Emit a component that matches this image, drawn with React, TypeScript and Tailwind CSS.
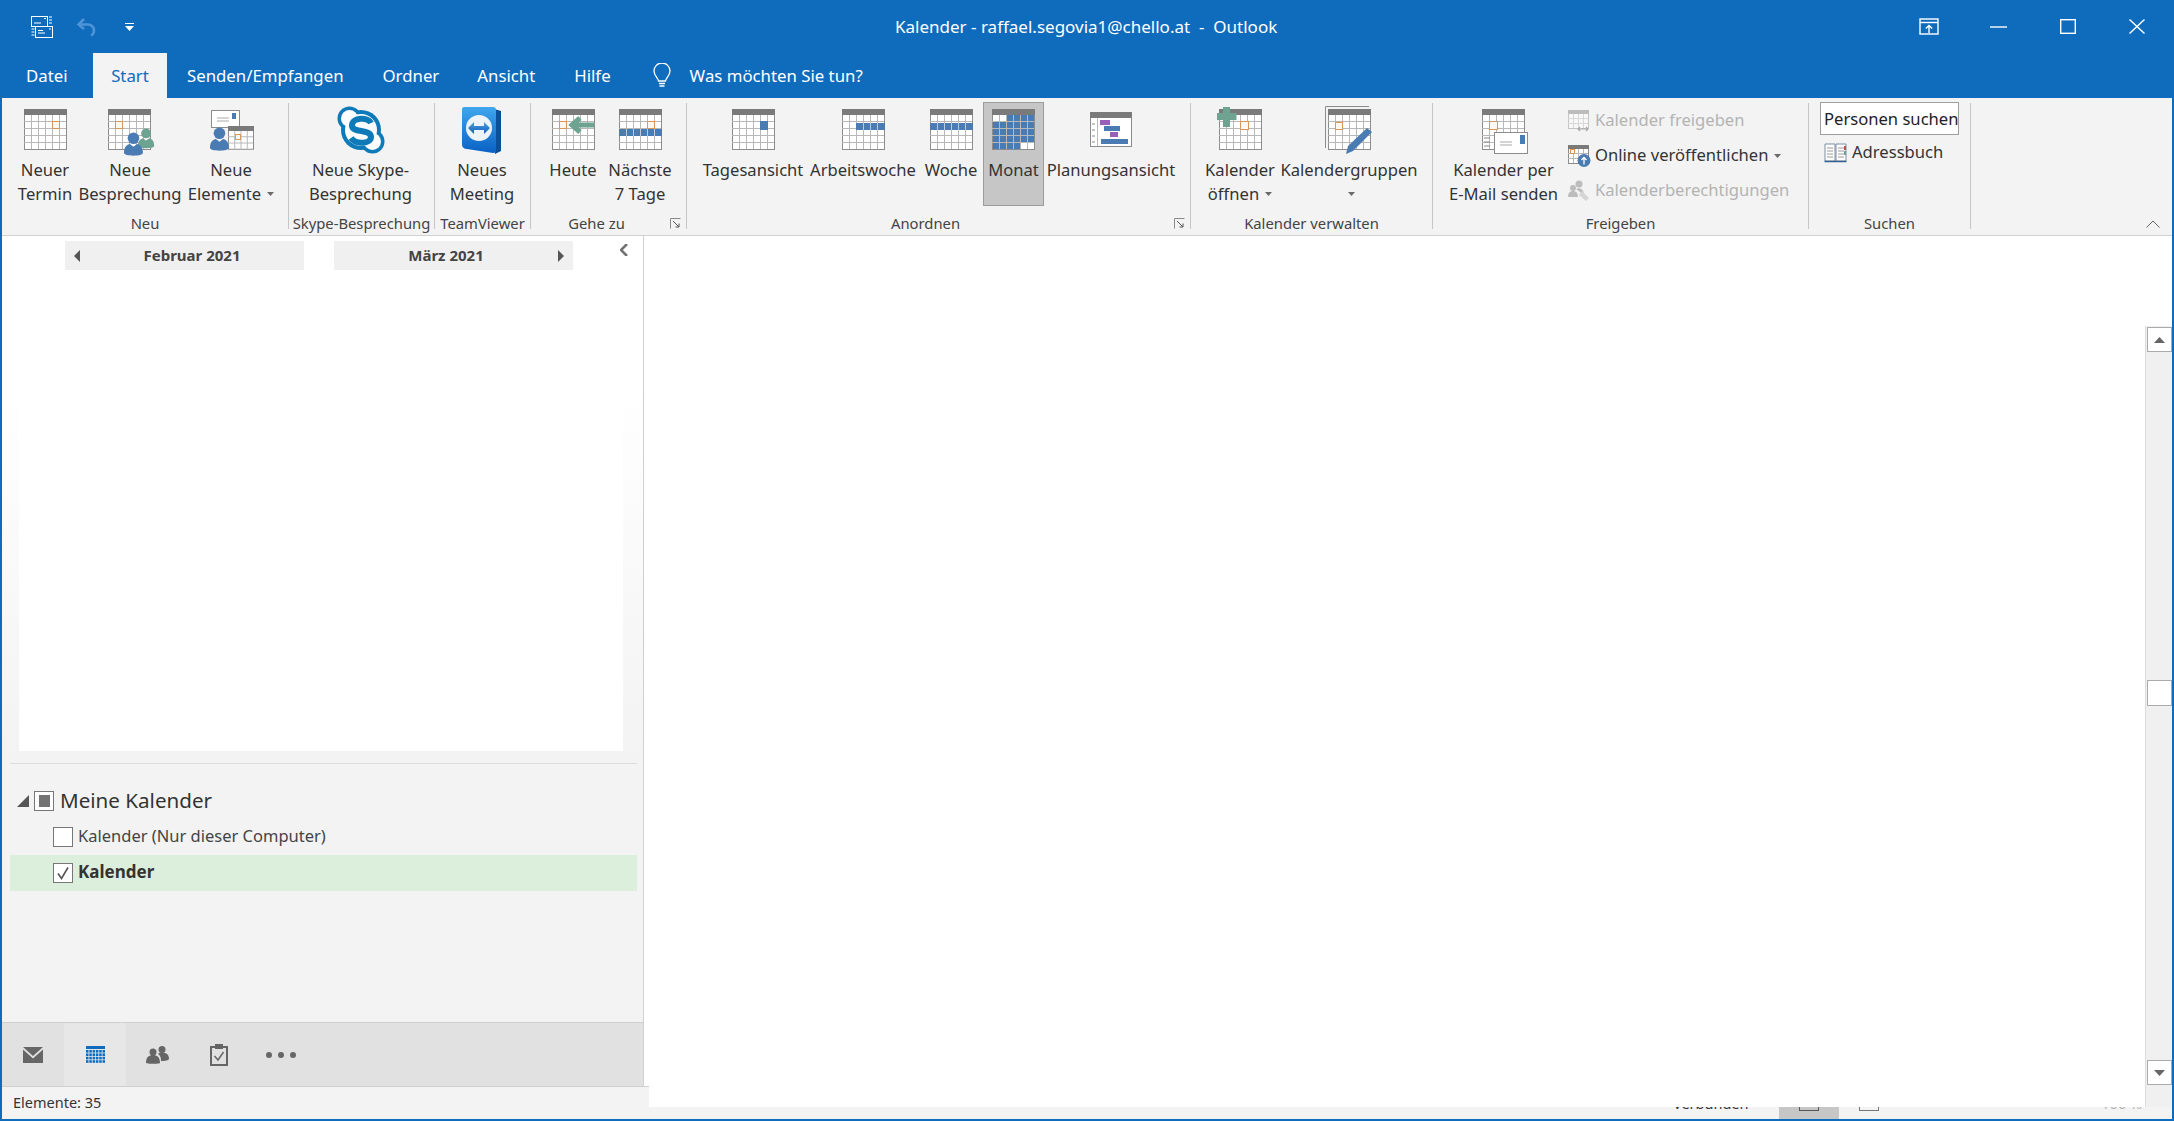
import React from "react";

const ORANGE = "#d9975a";
const BLUE = "#4a7cb3";
const TEAL = "#6ea392";

function Cal({ x = 0, y = 0, cols = 6, rows = 5, cell = 7, head = 5, children }: { x?: number; y?: number; cols?: number; rows?: number; cell?: number; head?: number; children?: React.ReactNode }) {
  const w = cols * cell;
  const h = rows * cell;
  const lines: React.ReactNode[] = [];
  for (let i = 1; i < cols; i++) lines.push(<path key={"c" + i} d={`M${i * cell + 0.5} ${head}V${head + h}`} stroke="#b8b8b8" />);
  for (let j = 1; j < rows; j++) lines.push(<path key={"r" + j} d={`M0 ${head + j * cell + 0.5}H${w}`} stroke="#b8b8b8" />);
  return (
    <g transform={`translate(${x} ${y})`}>
      <rect x="0.5" y="0.5" width={w} height={h + head} fill="#fff" stroke="#8c8c8c" />
      {lines}
      {children}
      <rect x="0" y="0" width={w + 1} height={head + 1} fill="#7a7a7a" />
    </g>
  );
}

const Sq = ({ x, y, s = 7 }: { x: number; y: number; s?: number }) => <rect x={x + 0.5} y={y + 0.5} width={s} height={s} fill="#fdf8f2" stroke={ORANGE} />;
const Svg = ({ w, h, children, className }: { w: number; h: number; children: React.ReactNode; className?: string }) => (
  <svg width={w} height={h} viewBox={`0 0 ${w} ${h}`} className={"block shrink-0 overflow-visible " + (className ?? "")}>
    {children}
  </svg>
);

const Person = ({ x, y, c, s = 1 }: { x: number; y: number; c: string; s?: number }) => (
  <g transform={`translate(${x} ${y}) scale(${s})`} fill={c}>
    <circle cx="9" cy="6" r="5.5" />
    <path d="M0 20c0-6 3-8 5.500-8.500L9 14l3.500-2.500C15 12 18 14 18 20c0 1.500-4 2.500-9 2.500S0 21.500 0 20z" />
  </g>
);

const IconSlot = ({ children }: { children: React.ReactNode }) => <div className="h-[49px] flex items-start justify-center">{children}</div>;

function RB({ w, icon, lines, caret, active }: { w: number; icon: React.ReactNode; lines: string[]; caret?: boolean; active?: boolean }) {
  return (
    <div style={{ width: w }} className={"shrink-0 h-[104px] -mt-px flex flex-col items-center " + (active ? "bg-[#c6c6c6] border border-[#9c9c9c] pt-[6px]" : "pt-[7px]")}>
      <IconSlot>{icon}</IconSlot>
      <div className="text-center leading-[24px] whitespace-nowrap">
        {lines.map((l, i) => (
          <div key={i} className="h-[24px] flex items-center justify-center">
            {l}
            {caret && i === lines.length - 1 ? <Caret className="ml-[6px]" /> : null}
          </div>
        ))}
      </div>
    </div>
  );
}

const Caret = ({ className = "" }: { className?: string }) => (
  <svg width="7" height="4" viewBox="0 0 7 4" className={"inline-block " + className}>
    <path d="M0 0h7L3.500 4z" fill="#6a6a6a" />
  </svg>
);

const Launcher = () => (
  <svg width="11" height="11" viewBox="0 0 11 11" className="absolute right-[5px] bottom-0">
    <path d="M0.500 10.500V0.500H10.500" fill="none" stroke="#8a8a8a" />
    <path d="M3 3l6 6M9 5.500V9H5.500" fill="none" stroke="#555" />
  </svg>
);

function Group({ w, pl = 0, label, pr = 0, launcher, children }: { w: number; pl?: number; pr?: number; label: string; launcher?: boolean; children: React.ReactNode }) {
  return (
    <div style={{ width: w }} className="shrink-0 h-[126px] flex flex-col border-r border-[#c6c6c6] relative">
      <div style={{ paddingLeft: pl }} className="flex-1 min-h-0 flex items-start">
        {children}
      </div>
      <div style={{ paddingRight: pr }} className="h-[12px] leading-[12px] text-[14.8px] text-center whitespace-nowrap text-[#444]">
        {label}
      </div>
      {launcher && <Launcher />}
    </div>
  );
}

function Tabs() {
  return (
    <div className="h-[45px] flex items-stretch text-white text-[16.8px]">
      <div className="w-[93px] pl-[26px] flex items-center">Datei</div>
      <div className="w-[74px] bg-[#f3f3f3] text-[#0f6cbd] flex items-center justify-center">Start</div>
      <div className="ml-[20px] flex items-center">Senden/Empfangen</div>
      <div className="ml-[39px] flex items-center">Ordner</div>
      <div className="ml-[38px] flex items-center">Ansicht</div>
      <div className="ml-[39px] flex items-center">Hilfe</div>
      <div className="ml-[41px] flex items-center">
        <svg width="20" height="26" viewBox="0 0 20 26">
          <path d="M6.500 18c0-3-4.500-5-4.500-10a8 8 0 0 1 16 0c0 5-4.500 7-4.500 10z" fill="none" stroke="#fff" strokeWidth="1.300" />
          <path d="M7 20.500h6M7.500 23h5" stroke="#fff" strokeWidth="1.300" />
        </svg>
      </div>
      <div className="ml-[18px] flex items-center">Was möchten Sie tun?</div>
    </div>
  );
}

function TitleBar() {
  return (
    <div className="h-[53px] relative flex items-center text-white">
      <div className="flex items-center pl-[30px]">
        <svg width="24" height="24" viewBox="0 0 24 24" fill="none" stroke="#fff">
          <rect x="1.500" y="1.500" width="16" height="10" fill="#0f6cbd" />
          <path d="M4 8h7M14 3.500h2" />
          <path d="M19 2h3M19 5h3M19 8h3" />
          <rect x="5.500" y="11.500" width="17" height="11" fill="#0f6cbd" />
          <path d="M8 18h7M8 15.500h5M19 14h2M1.500 14h3M1.500 17h3M1.500 20h3" />
        </svg>
        <svg width="22" height="22" viewBox="0 0 22 22" fill="none" stroke="#4f94d6" strokeWidth="2.500" className="ml-[22px]">
          <path d="M8 3L2.500 8.500 8 13" />
          <path d="M3 8.500h9a6 6 0 0 1 6 6c0 2-1 4-3 5" />
        </svg>
        <svg width="9" height="8" viewBox="0 0 9 8" className="ml-[27px]">
          <path d="M0 0h9v1H0zM0 3h9L4.500 8z" fill="#fff" />
        </svg>
      </div>
      <div className="absolute left-[895px] top-0 h-full flex items-center whitespace-pre text-[17px]">Kalender - raffael.segovia1@chello.at  -  Outlook</div>
      <div className="ml-auto flex items-center pr-[29px]">
        <svg width="20" height="17" viewBox="0 0 20 17" fill="none" stroke="#fff" strokeWidth="1.400">
          <rect x="1" y="1" width="18" height="15" />
          <path d="M1 4.500h18" />
          <path d="M10 15V7.500M6.800 10.500L10 7.500l3.200 3" />
        </svg>
        <svg width="17" height="2" viewBox="0 0 17 2" className="ml-[51px]"><path d="M0 1h17" stroke="#fff" strokeWidth="1.400" /></svg>
        <svg width="16" height="15" viewBox="0 0 16 15" fill="none" stroke="#fff" strokeWidth="1.400" className="ml-[53px]"><rect x="0.700" y="0.700" width="14.600" height="13.600" /></svg>
        <svg width="16" height="15" viewBox="0 0 16 15" fill="none" stroke="#fff" strokeWidth="1.400" className="ml-[53px]"><path d="M0.500 0.500l15 14M15.500 0.500l-15 14" /></svg>
      </div>
    </div>
  );
}

const blue = (x: number, y: number, w: number, h = 7) => <rect x={x} y={y} width={w} height={h} fill={BLUE} />;

function MonthCells() {
  const out: React.ReactNode[] = [];
  for (let r = 0; r < 5; r++)
    for (let c = 0; c < 6; c++) {
      if (r === 0 && c < 2) continue;
      if (r === 4 && c > 3) continue;
      out.push(<rect key={r + "-" + c} x={c * 7 + 1} y={5 + r * 7 + 1} width={6} height={6} fill={BLUE} />);
    }
  return <>{out}</>;
}

function Ribbon() {
  return (
    <div className="h-[138px] bg-[#f3f3f3] border-b border-[#d2d2d2] pt-[5px] flex items-start text-[16.6px] text-[#333] relative">
      <Group w={287} pl={12} label="Neu">
        <RB w={62} lines={["Neuer", "Termin"]} icon={<Svg w={43} h={41}><Cal><Sq x={28} y={12} /></Cal></Svg>} />
        <RB w={108} lines={["Neue", "Besprechung"]} icon={<Svg w={44} h={46}><Cal><Sq x={7} y={12} /></Cal><Person x={30} y={19} c={TEAL} s={0.9} /><Person x={16} y={23} c={BLUE} s={1.05} /></Svg>} />
        <RB w={94} lines={["Neue", "Elemente"]} caret icon={<Svg w={43} h={42}>
          <rect x="1.500" y="1.500" width="28" height="17" fill="#fff" stroke="#8c8c8c" />
          <path d="M7 9h12M7 12h12" stroke="#aaa" />
          <rect x="22" y="4" width="4" height="6" fill={BLUE} />
          <Cal x={18} y={17} cols={4} rows={3} cell={6.25} head={4}><Sq x={7} y={8} s={5} /></Cal>
          <Person x={0} y={18} c={BLUE} s={1.05} />
        </Svg>} />
      </Group>

      <Group w={146} label="Skype-Besprechung">
        <RB w={143} lines={["Neue Skype-", "Besprechung"]} icon={<svg width="48" height="48" viewBox="0 0 48 48" className="block -mt-[3px]">
          <g fill="#0f7ab8"><circle cx="24" cy="24" r="20" /><circle cx="12.500" cy="12.500" r="12" /><circle cx="35.500" cy="35.500" r="12" /></g>
          <g fill="#fbfdfe"><circle cx="24" cy="24" r="16" /><circle cx="12.500" cy="12.500" r="8.500" /><circle cx="35.500" cy="35.500" r="8.500" /></g>
          <path d="M34 17c-3-6-19-6-19 2.500 0 8 19 3 19 11.500 0 7-15 8-20 1" fill="none" stroke="#0f7ab8" strokeWidth="6" />
        </svg>} />
      </Group>

      <Group w={96} label="TeamViewer">
        <RB w={94} lines={["Neues", "Meeting"]} icon={<svg width="42" height="48" viewBox="0 0 42 48" className="block -mt-[2px]">
          <defs>
            <linearGradient id="tv" x1="0" y1="0" x2="0" y2="1"><stop offset="0" stopColor="#3fa7ee" /><stop offset="1" stopColor="#0a62c4" /></linearGradient>
            <linearGradient id="tv2" x1="0" y1="0" x2="0" y2="1"><stop offset="0" stopColor="#4d9ee6" /><stop offset="1" stopColor="#0f5fb5" /></linearGradient>
          </defs>
          <path d="M30 1l10 3v40l-6 3z" fill="#0c4f99" />
          <path d="M3 0h29c2 0 3 1 3 3v40c0 2-1 3-3 3L6 42c-3 0-5-2-5-4V2c0-1 1-2 2-2z" fill="url(#tv)" />
          <circle cx="18" cy="21" r="13" fill="#eef3f8" />
          <path d="M7 21l6-6v4h10v-4l6 6-6 6v-4H13v4z" fill="url(#tv2)" />
        </svg>} />
      </Group>

      <Group w={156} pl={9} pr={24} label="Gehe zu" launcher>
        <RB w={66} lines={["Heute"]} icon={<Svg w={43} h={41}><Cal><Sq x={7} y={12} /><path d="M42 16H20M28 9l-8 7 8 7" fill="none" stroke={TEAL} strokeWidth="5" /></Cal></Svg>} />
        <RB w={68} lines={["Nächste", "7 Tage"]} icon={<Svg w={43} h={41}><Cal>{blue(0, 20, 43)}<path d="M7.500 20v7M14.500 20v7M21.500 20v7M28.500 20v7M35.500 20v7" stroke="#b8cbe0" /><Sq x={28} y={12} /></Cal></Svg>} />
      </Group>

      <Group w={504} pl={12} pr={26} label="Anordnen" launcher>
        <RB w={108} lines={["Tagesansicht"]} icon={<Svg w={43} h={41}><Cal>{blue(28, 12, 8, 9)}</Cal></Svg>} />
        <RB w={112} lines={["Arbeitswoche"]} icon={<Svg w={43} h={41}><Cal>{blue(14, 14, 29)}<path d="M21.500 14v7M28.500 14v7M35.500 14v7" stroke="#b8cbe0" /></Cal></Svg>} />
        <RB w={64} lines={["Woche"]} icon={<Svg w={43} h={41}><Cal>{blue(0, 14, 43)}<path d="M7.500 14v7M14.500 14v7M21.500 14v7M28.500 14v7M35.500 14v7" stroke="#b8cbe0" /></Cal></Svg>} />
        <RB w={61} active lines={["Monat"]} icon={<Svg w={43} h={41}><Cal><MonthCells /></Cal></Svg>} />
        <RB w={134} lines={["Planungsansicht"]} icon={<Svg w={43} h={39} className="mt-[3px]">
          <rect x="0.500" y="0.500" width="41" height="34" fill="#fff" stroke="#8c8c8c" />
          <rect x="0" y="0" width="42" height="6" fill="#7a7a7a" />
          <path d="M7.500 6v28" stroke="#bbb" />
          <path d="M2 12h3M2 18h3M2 24h3M2 30h3" stroke="#888" />
          <rect x="10" y="8" width="10" height="5" fill="#9a5fb8" />
          <rect x="14" y="14" width="16" height="5" fill={BLUE} />
          <rect x="20" y="20" width="8" height="5" fill="#9a5fb8" />
          <rect x="11" y="27" width="27" height="5" fill={BLUE} />
        </Svg>} />
      </Group>

      <Group w={242} pl={12} label="Kalender verwalten">
        <RB w={74} lines={["Kalender", "öffnen"]} caret icon={<Svg w={46} h={44} className="-mt-[3px]">
          <Cal x={2} y={3}><Sq x={21} y={12} s={8} /></Cal>
          <path d="M6 1h7v6h6.500v7H13v7H6v-7H0V7h6z" fill={TEAL} />
        </Svg>} />
        <RB w={144} lines={["Kalendergruppen", ""]} caret icon={<Svg w={48} h={48} className="-mt-[3px]">
          <path d="M0.500 42V0.500H44" fill="none" stroke="#8c8c8c" />
          <Cal x={3} y={3}><Sq x={7} y={13} /></Cal>
          <path d="M42 22l5 4-19 19-7 3 2-8z" fill={BLUE} />
        </Svg>} />
      </Group>

      <Group w={376} pl={14} label="Freigeben">
        <RB w={113} lines={["Kalender per", "E-Mail senden"]} icon={<Svg w={46} h={47} className="ml-[2px]">
          <Cal><Sq x={7} y={12} s={8} /></Cal>
          <rect x="12.500" y="23.500" width="33" height="21" fill="#fff" stroke="#8c8c8c" />
          <path d="M18 33h12M18 36h12" stroke="#aaa" />
          <rect x="38" y="26" width="5" height="9" fill={BLUE} />
          <path d="M2 29h6M2 33h6M2 37h6" stroke="#888" />
        </Svg>} />
        <div className="ml-[8px] flex flex-col">
          <div className="h-[35px] flex items-center gap-[5px] text-[#b3b3b3]">
            <Svg w={22} h={22}>
              <g opacity="0.45"><Cal cols={4} rows={3} cell={5} head={3} /></g>
              <path d="M10 19h10M12 17l-2 2 2 2M18 17l2 2-2 2" fill="none" stroke="#aaa" strokeWidth="1.200" />
            </Svg>
            <span>Kalender freigeben</span>
          </div>
          <div className="h-[35px] flex items-center gap-[5px]">
            <Svg w={22} h={22}>
              <Cal cols={4} rows={3} cell={5} head={3}><Sq x={2} y={4} s={4} /></Cal>
              <circle cx="16" cy="15.500" r="6.500" fill={BLUE} />
              <path d="M16 19.500v-7M13.500 15l2.500-2.500 2.500 2.500" fill="none" stroke="#fff" strokeWidth="1.300" />
            </Svg>
            <span>Online veröffentlichen</span>
            <Caret className="ml-[1px]" />
          </div>
          <div className="h-[35px] flex items-center gap-[5px] text-[#b3b3b3]">
            <Svg w={22} h={22}>
              <circle cx="11" cy="4" r="3.500" fill="#bdbdbd" />
              <circle cx="5" cy="8" r="3" fill="#bdbdbd" />
              <path d="M0 17c0-4 2-6 5-6s5 2 5 6zM8 9c4-2 8 0 8 6" fill="#bdbdbd" />
              <path d="M14 11l7 7-3 3-7-6z" fill="#d5d5d5" />
            </Svg>
            <span>Kalenderberechtigungen</span>
          </div>
        </div>
      </Group>

      <Group w={162} pl={11} label="Suchen">
        <div className="flex flex-col -mt-px">
          <div className="w-[139px] h-[33px] pt-[1px] bg-white border border-[#9f9f9f] pl-[3px] flex items-center whitespace-nowrap overflow-hidden text-[#222]">Personen suchen</div>
          <div className="mt-[7px] pl-[4px] h-[20px] flex items-center gap-[5px]">
            <Svg w={23} h={20}>
              <path d="M1 2h10v17H1zM12 2h10v17H12z" fill="#fff" stroke="#7d8ea3" />
              <path d="M0.500 19.500h22" stroke="#35608f" strokeWidth="1.500" />
              <path d="M3 6h6M3 9h6M3 12h6M3 15h6M14 6h6M14 9h6M14 12h6M14 15h6" stroke="#999" />
              <path d="M21 4v4" stroke="#c0504d" strokeWidth="2" />
              <path d="M21 9v4" stroke="#6ea392" strokeWidth="2" />
            </Svg>
            <span>Adressbuch</span>
          </div>
        </div>
      </Group>

      <svg width="14" height="8" viewBox="0 0 14 8" className="absolute left-[2144px] bottom-[7px]" fill="none" stroke="#666">
        <path d="M0.500 7.500L7 1l6.500 6.500" />
      </svg>
    </div>
  );
}

const Check = ({ checked, mid }: { checked?: boolean; mid?: boolean }) => (
  <div className="w-[20px] h-[20px] shrink-0 bg-white border border-[#777] flex items-center justify-center">
    {mid && <div className="w-[11px] h-[12px] bg-[#737373]" />}
    {checked && (
      <svg width="14" height="14" viewBox="0 0 14 14"><path d="M2 7.500l3.500 5L12 1.500" fill="none" stroke="#555" strokeWidth="1.600" /></svg>
    )}
  </div>
);

function NavBtn({ active, children }: { active?: boolean; children: React.ReactNode }) {
  return <div className={"w-[62px] h-full flex items-center justify-center " + (active ? "bg-[#e7e7e7]" : "")}>{children}</div>;
}

function NavPane() {
  return (
    <div className="w-[647px] shrink-0 flex flex-col bg-white">
      <div className="flex-1 min-h-0 w-[642px] border-r border-[#d0d0d0] flex flex-col">
        <div className="h-[515px] pl-[17px] pr-[20px] bg-linear-to-b from-white from-[30%] to-[#f3f3f3] flex flex-col">
          <div className="h-[34px] shrink-0 bg-white flex items-start pt-[5px] pl-[46px] text-[15px] font-bold text-[#444] relative">
            <div className="w-[239px] shrink-0 h-[29px] pl-[15px] bg-[#f0f0f0] relative flex items-center justify-center">
              <svg width="6" height="12" viewBox="0 0 6 12" className="absolute left-[9px] top-[9px]"><path d="M6 0v12L0 6z" fill="#555" /></svg>
              Februar 2021
            </div>
            <div className="ml-[30px] w-[239px] shrink-0 h-[29px] pr-[15px] bg-[#f0f0f0] relative flex items-center justify-center">
              März 2021
              <svg width="6" height="12" viewBox="0 0 6 12" className="absolute right-[9px] top-[9px]"><path d="M0 0v12l6-6z" fill="#555" /></svg>
            </div>
            <svg width="8" height="12" viewBox="0 0 8 12" className="ml-[47px] mt-[3px] shrink-0"><path d="M7 0L1 6l6 6" fill="none" stroke="#707070" strokeWidth="2.500" /></svg>
          </div>
          <div className="flex-1 bg-white" />
        </div>
        <div className="flex-1 bg-[#f3f3f3] flex flex-col min-h-0">
          <div className="mt-[12px] ml-[8px] mr-[6px] h-px bg-[#dcdcdc]" />
          <div className="h-[20px] mt-[27px] flex items-center pl-[15px]">
            <svg width="12" height="12" viewBox="0 0 12 12"><path d="M12 0v12H0z" fill="#555" /></svg>
            <div className="ml-[5px]"><Check mid /></div>
            <span className="ml-[6px] -mt-[2px] text-[20.6px] text-[#333] leading-none whitespace-nowrap">Meine Kalender</span>
          </div>
          <div className="h-[20px] mt-[16px] flex items-center pl-[51px] text-[16.5px] text-[#444]">
            <Check />
            <span className="ml-[5px] -mt-[2px]">Kalender (Nur dieser Computer)</span>
          </div>
          <div className="h-[36px] mt-[8px] ml-[8px] mr-[6px] bg-[#dcefdc] flex items-center pl-[43px] text-[17px] font-bold text-[#333]">
            <Check checked />
            <span className="ml-[5px] -mt-[2px]">Kalender</span>
          </div>
        </div>
        <div className="h-[64px] shrink-0 bg-[#e1e1e1] border-t border-[#cfcfcf] flex items-center">
          <NavBtn>
            <svg width="20" height="16" viewBox="0 0 20 16"><path d="M0 0l10 9 10-9zM0 2.500V16h20V2.500l-10 9z" fill="#666" /></svg>
          </NavBtn>
          <NavBtn active>
            <svg width="19" height="17" viewBox="0 0 19 17" fill="#0f6cbd">
              <rect width="19" height="3" />
              {[4, 7.4, 10.8, 14.2].flatMap((y) => [0, 3.3, 6.6, 9.9, 13.2, 16.5].map((x) => <rect key={x + "," + y} x={x} y={y} width="2.500" height="2.600" />))}
            </svg>
          </NavBtn>
          <NavBtn>
            <svg width="23" height="18" viewBox="0 0 23 18" fill="#666">
              <circle cx="7" cy="6" r="3.500" /><circle cx="16" cy="3.500" r="3.500" />
              <path d="M0 17c0-6 3-8 7-8s7 2 7 8c0 1-14 1-14 0zM15 15c0-4-1-6-3-7 1-1 2-1.500 4-1.500 4 0 7 2 7 6 0 2-4 2.500-8 2.500z" />
            </svg>
          </NavBtn>
          <NavBtn>
            <svg width="18" height="22" viewBox="0 0 18 22" fill="none">
              <rect x="1" y="3" width="16" height="18" stroke="#666" strokeWidth="2" />
              <rect x="5" y="0" width="8" height="5" fill="#666" />
              <path d="M4.500 12l3.500 4 5.500-8" stroke="#666" strokeWidth="1.500" />
            </svg>
          </NavBtn>
          <NavBtn>
            <svg width="30" height="6" viewBox="0 0 30 6" fill="#666"><circle cx="3" cy="3" r="3" /><circle cx="15" cy="3" r="3" /><circle cx="27" cy="3" r="3" /></svg>
          </NavBtn>
        </div>
      </div>
      <div className="h-[33px] shrink-0 bg-[#f3f3f3] border-t border-[#cfcfcf] pl-[11px] flex items-center text-[14.5px] text-[#333]">Elemente: 35</div>
    </div>
  );
}

function ScrollBtn({ up, h = 25 }: { up?: boolean; h?: number }) {
  return (
    <div style={{ height: h }} className="w-[25px] shrink-0 bg-white border border-[#ababab] flex items-center justify-center">
      {up !== undefined && (
        <svg width="11" height="6" viewBox="0 0 11 6"><path d={up ? "M5.500 0L11 6H0z" : "M0 0h11L5.500 6z"} fill="#666" /></svg>
      )}
    </div>
  );
}

function Main() {
  return (
    <div className="flex-1 min-w-0 flex flex-col">
      <div className="flex-1 min-h-0 flex">
        <div className="flex-1 bg-white" />
        <div className="w-[27px] shrink-0 flex flex-col">
          <div className="h-[90px] bg-white" />
          <div className="flex-1 bg-[#f0f0f0] border-l border-[#dcdcdc] pl-px flex flex-col">
            <div className="h-px" />
            <ScrollBtn up />
            <div className="h-[328px]" />
            <ScrollBtn h={26} />
            <div className="h-[354px]" />
            <ScrollBtn up={false} />
          </div>
        </div>
      </div>
      <div className="h-[12px] shrink-0 bg-[#f3f3f3] overflow-hidden flex items-start text-[14.5px] text-[#333]">
        <div className="ml-[1024px] w-[75px] -mt-[14px] h-[20px] leading-[20px] whitespace-nowrap">Verbunden</div>
        <div className="ml-[31px] w-[60px] h-[12px] bg-[#c6c6c6] flex justify-center">
          <div className="w-[20px] h-[4px] border border-t-0 border-[#555]" />
        </div>
        <div className="ml-[20px] w-[20px] h-[4px] border border-t-0 border-[#777]" />
        <div className="ml-auto mr-[30px] -mt-[14px] h-[20px] leading-[20px] text-[#b5b5b5]">100 %</div>
      </div>
    </div>
  );
}

export default function App() {
  return (
    <div className="w-[2174px] h-[1121px] overflow-hidden bg-[#0f6cbd] flex flex-col font-['Noto_Sans','Open_Sans',sans-serif]">
      <TitleBar />
      <Tabs />
      <div className="flex-1 min-h-0 mx-[2px] mb-[2px] flex flex-col">
        <Ribbon />
        <div className="flex-1 min-h-0 flex">
          <NavPane />
          <Main />
        </div>
      </div>
    </div>
  );
}
